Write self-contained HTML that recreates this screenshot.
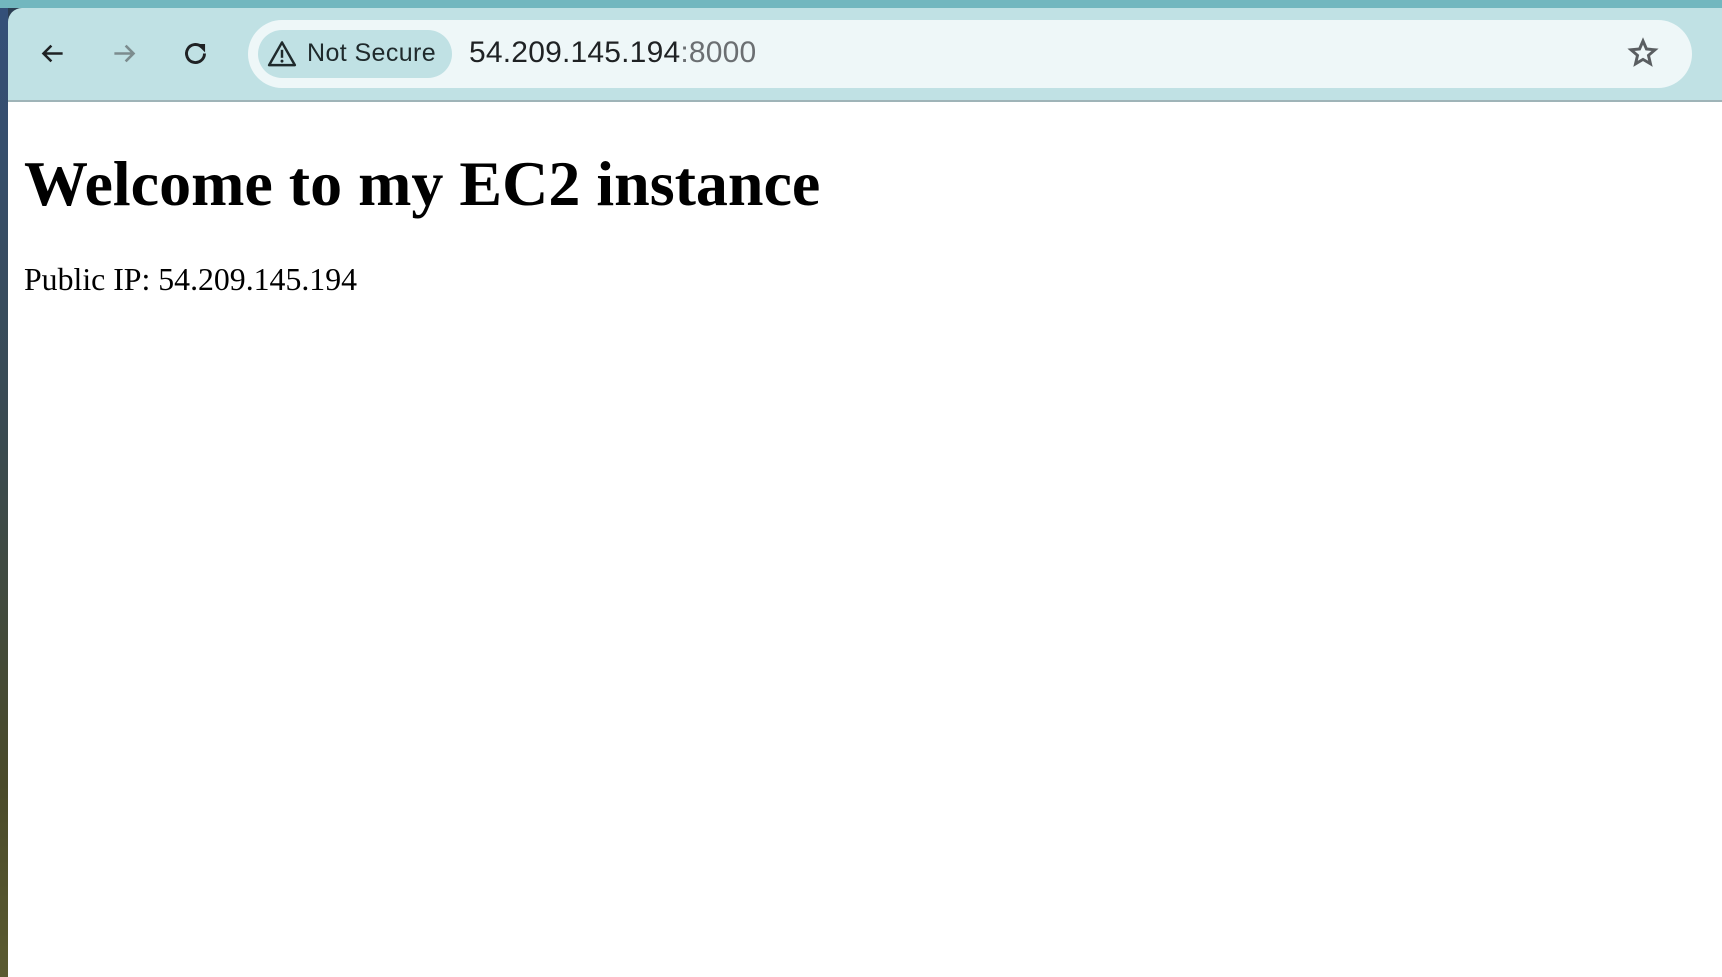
<!DOCTYPE html>
<html><head><style>
html,body{margin:0;padding:0;width:1722px;height:977px;overflow:hidden;background:#2b3d52;}
.left{position:absolute;left:0;top:0;width:8px;height:977px;background:linear-gradient(#34507a,#3a4a50 45%,#4a4a2a 80%,#5a5a30);}
.top{position:absolute;left:0;top:0;width:1722px;height:8px;background:#72b7bf;}
.bar{position:absolute;left:8px;top:8px;width:1714px;background:#c0e1e4;border-top-left-radius:14px;border-bottom:2px solid #9fb4b8;box-sizing:border-box;height:94px;}
.omni{position:absolute;left:248px;top:20px;width:1444px;height:68px;background:#eef7f8;border-radius:34px;}
.pill{position:absolute;left:258px;top:30px;width:194px;height:48px;background:#c0e1e4;border-radius:24px;}
.t{position:absolute;white-space:nowrap;font-family:"Liberation Sans",sans-serif;line-height:1;}
.ns{left:307px;top:41px;font-size:25px;color:#1f2a2c;letter-spacing:0.4px;}
.url{left:469px;top:38px;font-size:30px;color:#1f2224;letter-spacing:0.2px;}
.url span{color:#6b6f72;}
.page{position:absolute;left:8px;top:102px;width:1714px;height:875px;background:#fff;}
h1{position:absolute;left:16px;top:45px;margin:0;font:bold 64px "Liberation Serif",serif;color:#000;white-space:nowrap;}
p{position:absolute;left:16px;top:160px;margin:0;font:31.8px "Liberation Serif",serif;color:#000;white-space:nowrap;}
svg{position:absolute;}
</style></head><body>
<div class="left"></div><div class="top"></div>
<div class="bar"></div>
<svg style="left:39px;top:40px" width="27" height="27" viewBox="0 0 24 24"><path d="M21 12H4M11 5l-7 7 7 7" fill="none" stroke="#1f2224" stroke-width="2.3"/></svg>
<svg style="left:111px;top:40px" width="27" height="27" viewBox="0 0 24 24"><path d="M3 12h17M13 5l7 7-7 7" fill="none" stroke="#7c8c8e" stroke-width="2.3"/></svg>
<svg style="left:182px;top:40px" width="27" height="27" viewBox="0 0 24 24"><path d="M20 12a8 8 0 1 1-2.4-5.7" fill="none" stroke="#1f2224" stroke-width="2.6"/><path d="M13 3.5h7.5V11z" fill="#1f2224"/></svg>
<div class="omni"></div>
<div class="pill"></div>
<svg style="left:267px;top:40px" width="30" height="27" viewBox="0 0 24 22"><path d="M12 2L1.5 20.5h21z" fill="none" stroke="#1f2a2c" stroke-width="2" stroke-linejoin="round"/><path d="M12 8v6.5" stroke="#1f2a2c" stroke-width="2"/><circle cx="12" cy="17.2" r="1.2" fill="#1f2a2c"/></svg>
<div class="t ns">Not Secure</div>
<div class="t url">54.209.145.194<span>:8000</span></div>
<svg style="left:1627px;top:37px" width="32" height="32" viewBox="0 0 24 24"><path d="M12 3l2.6 6 6.4.6-4.9 4.2 1.5 6.3L12 16.8 6.4 20.1l1.5-6.3L3 9.6l6.4-.6z" fill="none" stroke="#5a5e61" stroke-width="2.2"/></svg>
<div class="page">
<h1>Welcome to my EC2 instance</h1>
<p>Public IP: 54.209.145.194</p>
</div>
</body></html>
